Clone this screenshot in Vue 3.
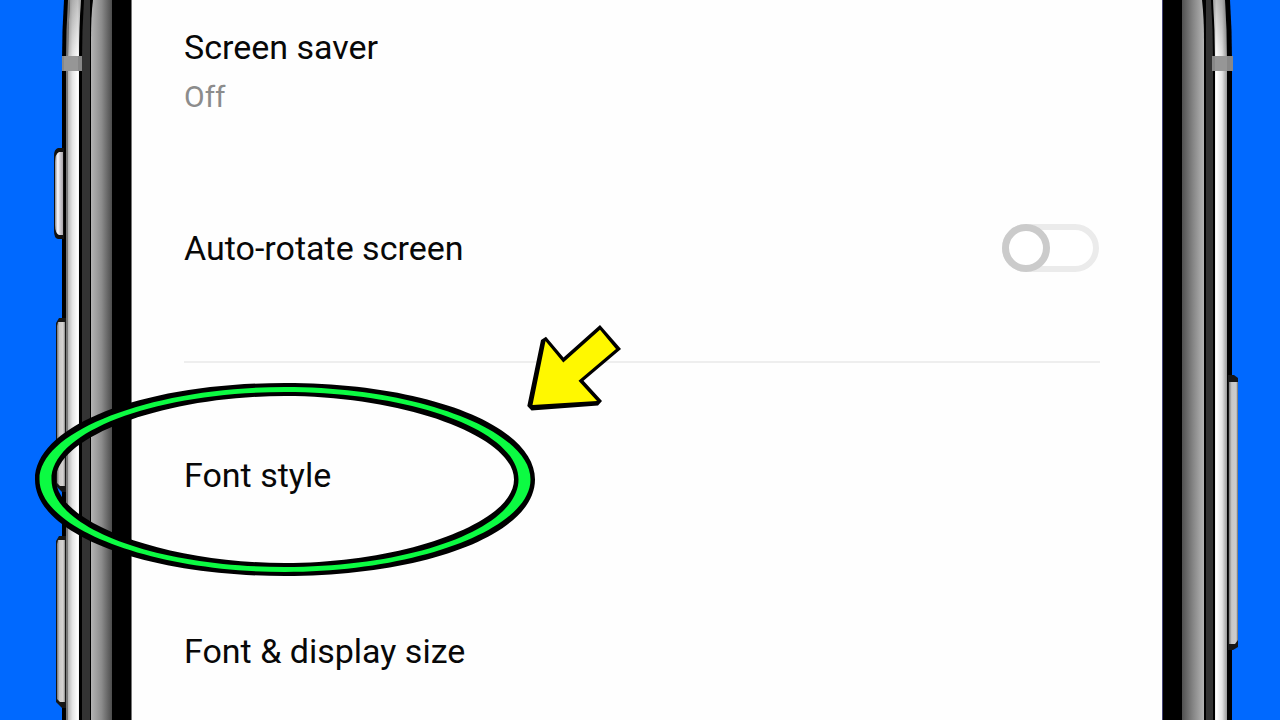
<script setup>
import { ref } from 'vue'

const autoRotate = ref(false)
</script>

<template>
  <main class="stage">
    <svg class="rail rail-left" viewBox="0 0 132 720" preserveAspectRatio="none" aria-hidden="true">
      <defs>
        <linearGradient id="steel-l"><stop offset="0" stop-color="#b5b5b5" /><stop offset=".35" stop-color="#e6e6e6" /><stop offset=".75" stop-color="#fff" /><stop offset="1" stop-color="#d8d8d8" /></linearGradient>
        <linearGradient id="bevel-l"><stop offset="0" stop-color="#b4b4b4" /><stop offset=".5" stop-color="#8c8c8c" /><stop offset="1" stop-color="#4c4c4c" /></linearGradient>
        <linearGradient id="key-l"><stop offset="0" stop-color="#777" /><stop offset=".3" stop-color="#c9c7c6" /><stop offset=".75" stop-color="#d6d4d3" /><stop offset="1" stop-color="#888" /></linearGradient>
        <linearGradient id="switch-l"><stop offset="0" stop-color="#8a8a8e" /><stop offset=".35" stop-color="#fafaff" /><stop offset=".6" stop-color="#d5d2d8" /><stop offset="1" stop-color="#aaa6aa" /></linearGradient>
        <linearGradient id="shade-l" x2="0" y2="1"><stop offset="0" stop-color="#000" stop-opacity=".25" /><stop offset="1" stop-color="#000" stop-opacity="0" /></linearGradient>
      </defs>
      <path d="M64 0Q62 30 62 60V720H132V0Z" fill="#000" />
      <path d="M68 0Q66 30 66 60V720H68V60Q68 30 70 0Z" fill="#777" />
      <path d="M70 0Q68 30 68 60V720H79V60Q79 25 81 0Z" fill="url(#steel-l)" />
      <path d="M70 0Q68 30 68 60H79Q79 25 81 0Z" fill="url(#shade-l)" />
      <path d="M84 0Q82 30 82 60V720H90V0Z" fill="#333" />
      <path d="M93 0Q91 15 91 40V720H112V0Z" fill="url(#bevel-l)" />
      <path d="M131 0H132V720H131Z" fill="#777" />
      <path d="M62 56H82V71H62Z" fill="#888" />
      <path d="M64 56H78V71H64Z" fill="#969696" />
      <path d="M64 148H58Q54 149 54 156V231Q54 238 58 239H64Z" fill="#111" />
      <path d="M63 152H59Q55 154 55 162V225Q55 233 59 235H63Z" fill="url(#switch-l)" />
      <g v-for="key in [{ top: 318, end: 492 }, { top: 536, end: 708 }]" :key="key.top">
        <path :d="`M66 ${key.top}H59L56 ${key.top + 5}V${key.end - 6}L62 ${key.end}H66Z`" fill="#161616" />
        <path :d="`M65 ${key.top + 4}H58L57 ${key.top + 8}V${key.end - 9}L60 ${key.end - 6}H65Z`" fill="url(#key-l)" />
      </g>
    </svg>

    <section class="screen">
      <div class="row row-first">
        <div>
          <h2 class="title">Screen saver</h2>
          <p class="value">Off</p>
        </div>
      </div>
      <div class="row">
        <label class="title" for="auto-rotate">Auto-rotate screen</label>
        <input id="auto-rotate" v-model="autoRotate" class="toggle" type="checkbox" role="switch" />
      </div>
      <hr class="divider" />
      <div class="row"><h2 class="title">Font style</h2></div>
      <div class="row"><h2 class="title">Font &amp; display size</h2></div>
    </section>

    <svg class="rail rail-right" viewBox="1162 0 118 720" preserveAspectRatio="none" aria-hidden="true">
      <defs>
        <linearGradient id="steel-r"><stop offset="0" stop-color="#ccc" /><stop offset=".25" stop-color="#fff" /><stop offset=".65" stop-color="#e2e2e2" /><stop offset="1" stop-color="#999" /></linearGradient>
        <linearGradient id="bevel-r"><stop offset="0" stop-color="#505050" /><stop offset=".5" stop-color="#858585" /><stop offset="1" stop-color="#b4b4b4" /></linearGradient>
        <linearGradient id="key-r"><stop offset="0" stop-color="#777" /><stop offset=".3" stop-color="#c8c8c8" /><stop offset=".8" stop-color="#ccc" /><stop offset="1" stop-color="#666" /></linearGradient>
        <linearGradient id="shade-r" x2="0" y2="1"><stop offset="0" stop-color="#000" stop-opacity=".25" /><stop offset="1" stop-color="#000" stop-opacity="0" /></linearGradient>
      </defs>
      <path d="M1162 0H1230Q1232 30 1232 60V720H1162Z" fill="#000" />
      <path d="M1162 0H1163V720H1162Z" fill="#447" />
      <path d="M1182 0H1202Q1204 18 1204 40V720H1182Z" fill="url(#bevel-r)" />
      <path d="M1206 0H1211Q1213 30 1213 60V720H1206Z" fill="#333" />
      <path d="M1213 0Q1215 30 1215 60V720H1227V60Q1227 30 1225 0Z" fill="url(#steel-r)" />
      <path d="M1213 0Q1215 30 1215 60H1227Q1227 30 1225 0Z" fill="url(#shade-r)" />
      <path d="M1212 56H1233V71H1212Z" fill="#888" />
      <path d="M1215 56H1227V71H1215Z" fill="#969696" />
      <path d="M1228 375H1234L1238 378V647L1233 650H1228Z" fill="#161616" />
      <path d="M1229 382H1238V640L1235 644H1229Z" fill="url(#key-r)" />
    </svg>

    <svg class="marks" viewBox="0 0 1280 720" preserveAspectRatio="none" aria-hidden="true">
      <path fill="#000" fill-rule="evenodd" d="M35 479.500C35 425 144 383 285 383S535 425 535 479.500S426 576 285 576S35 534 35 479.500ZM56 479.500C56 436 166 396 285 396S514 436 514 479.500S404 563 285 563S56 523 56 479.500Z" />
      <path fill="#0cfb42" fill-rule="evenodd" d="M39.500 479.500C39.500 430 154 387 285 387S530.500 430 530.500 479.500S416 572 285 572S39.500 529 39.500 479.500ZM51.500 479.500C51.500 431 156 392 285 392S518.500 431 518.500 479.500S414 567 285 567S51.500 528 51.500 479.500Z" />
      <path d="M541 340L546 336.700L563.500 357.500L600 325L621 349L583.500 380.700L602 401L598 405.500L531.500 410.500L527.300 406Z" fill="#000" />
      <path d="M545.500 341L563.300 362.500L600 329.800L616 349L578.500 380.700L597 401L532.500 405Z" fill="#fff800" />
    </svg>
  </main>
</template>

<style>
body {
  margin: 0;
}
</style>

<style scoped>
.stage {
  position: relative;
  display: flex;
  height: 100vh;
  overflow: hidden;
  background: #0069ff;
  font-family: Roboto, "Liberation Sans", sans-serif;
}

.rail {
  flex: none;
  height: 100%;
}

.rail-left {
  width: 132px;
}

.rail-right {
  width: 118px;
}

.screen {
  flex: 1;
  box-sizing: border-box;
  padding: 0 62px 0 52px;
  background: #fefefe;
}

.row {
  display: flex;
  align-items: center;
  justify-content: space-between;
  height: 176px;
}

.row-first {
  height: 144px;
  margin-bottom: 16px;
}

.title {
  margin: 0;
  color: #080808;
  font-size: 34px;
  font-weight: 400;
  line-height: 50px;
}

.value {
  margin: 0;
  color: #8c8c8c;
  font-size: 30px;
  font-weight: 400;
  line-height: 50px;
}

.divider {
  height: 2px;
  margin: 25px 0 24px;
  border: 0;
  background: #eee;
}

.toggle {
  position: relative;
  box-sizing: border-box;
  width: 97px;
  height: 48px;
  margin: 0 1px 0 0;
  border: 6px solid #ebebeb;
  border-radius: 24px;
  appearance: none;
  background: #fff;
}

.toggle::before {
  content: "";
  position: absolute;
  top: -6px;
  left: -6px;
  box-sizing: border-box;
  width: 48px;
  height: 48px;
  border: 7px solid #cbcbcb;
  border-radius: 50%;
  background: #fff;
}

.toggle:checked::before {
  left: 43px;
}

.marks {
  position: absolute;
  inset: 0;
  width: 100%;
  height: 100%;
  pointer-events: none;
}
</style>
